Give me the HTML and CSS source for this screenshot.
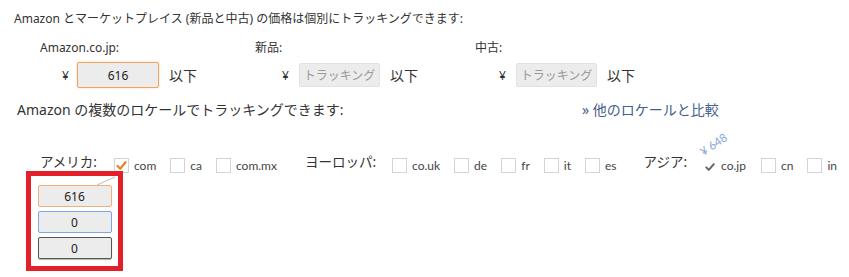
FILE: index.html
```html
<!DOCTYPE html>
<html lang="ja">
<head>
<meta charset="utf-8">
<title>Tracking</title>
<link rel="stylesheet" href="styles.css">
</head>
<body>
<div class="page">
  <p class="intro">Amazon とマーケットプレイス (新品と中古) の価格は個別にトラッキングできます:</p>
  <div class="prices">
    <div class="price-col col-amazon">
      <div class="price-label">Amazon.co.jp:</div>
      <div class="price-ctrl">
        <span class="yen">¥</span>
        <span class="field field-active">616</span>
        <span class="below">以下</span>
      </div>
    </div>
    <div class="price-col col-new">
      <div class="price-label">新品:</div>
      <div class="price-ctrl">
        <span class="yen">¥</span>
        <span class="field field-off">トラッキング</span>
        <span class="below">以下</span>
      </div>
    </div>
    <div class="price-col col-used">
      <div class="price-label">中古:</div>
      <div class="price-ctrl">
        <span class="yen">¥</span>
        <span class="field field-off">トラッキング</span>
        <span class="below">以下</span>
      </div>
    </div>
  </div>
  <div class="locale-head">
    <span class="locale-title">Amazon の複数のロケールでトラッキングできます:</span>
    <a class="compare" href="#">» 他のロケールと比較</a>
  </div>
  <div class="locales">
    <span class="region region-us">アメリカ:</span>
    <label class="loc loc-com"><span class="box box-checked"><svg viewBox="0 0 15 15" width="15" height="15"><path d="M3.5 8 L6.2 10.8 L11.5 4.2" fill="none" stroke="#e8822e" stroke-width="2.2" stroke-linecap="round" stroke-linejoin="round"/></svg></span>com</label>
    <label class="loc"><span class="box"></span>ca</label>
    <label class="loc"><span class="box"></span>com.mx</label>
    <span class="region region-eu">ヨーロッパ:</span>
    <label class="loc"><span class="box"></span>co.uk</label>
    <label class="loc"><span class="box"></span>de</label>
    <label class="loc"><span class="box"></span>fr</label>
    <label class="loc"><span class="box"></span>it</label>
    <label class="loc"><span class="box"></span>es</label>
    <span class="region region-asia">アジア:</span>
    <label class="loc loc-jp"><span class="tick"><svg viewBox="0 0 10 10" width="10" height="10"><path d="M1.3 5.4 L3.8 7.9 L8.8 2.2" fill="none" stroke="#666" stroke-width="2" stroke-linecap="round" stroke-linejoin="round"/></svg></span>co.jp<span class="jp-price">¥ 648</span></label>
    <label class="loc"><span class="box"></span>cn</label>
    <label class="loc"><span class="box"></span>in</label>
    <div class="popup">
      <svg class="popup-line" width="20" height="10" viewBox="0 0 20 10"><path d="M1 9 L19 1" stroke="#c8c8c8" stroke-width="1.2"/></svg>
      <span class="mini mini-orange">616</span>
      <span class="mini mini-blue">0</span>
      <span class="mini mini-dark">0</span>
    </div>
  </div>
</div>
</body>
</html>
```
FILE: styles.css
```css
html, body {
  margin: 0;
  padding: 0;
  background: #ffffff;
}
body {
  font-family: "Noto Sans", "Noto Sans CJK JP", sans-serif;
  color: #333333;
  width: 849px;
  height: 277px;
  overflow: hidden;
}
.page {
  padding: 10px 0 0 14px;
}
.intro {
  margin: 0;
  font-size: 12px;
  line-height: 18px;
  color: #333;
}
.prices {
  display: flex;
  margin-top: 12px;
  padding-left: 26px;
}
.price-col {
  display: flex;
  flex-direction: column;
}
.col-amazon { width: 215px; }
.col-new { width: 220px; }
.price-label {
  font-size: 12px;
  line-height: 16px;
  color: #333;
}
.price-ctrl {
  display: flex;
  align-items: center;
  margin-top: 6px;
  height: 26px;
}
.col-amazon .price-ctrl { padding-left: 22px; }
.col-new .price-ctrl { padding-left: 27px; }
.col-used .price-ctrl { padding-left: 24px; }
.yen {
  font-size: 12px;
  width: 15px;
  color: #333;
}
.field {
  display: flex;
  align-items: center;
  justify-content: center;
  box-sizing: border-box;
  font-size: 12px;
  background: #ececec;
}
.field-active {
  width: 82px;
  height: 26px;
  border: 1px solid #f0a45e;
  border-radius: 2px;
  color: #222;
  box-shadow: 0 0 2px rgba(240, 164, 94, 0.5);
}
.field-off {
  width: 81px;
  height: 24px;
  border: 1px solid #e2e2e2;
  border-radius: 2px;
  color: #9a9a9a;
  margin-left: 2px;
}
.below {
  font-size: 14px;
  margin-left: 10px;
  color: #333;
}
.locale-head {
  display: flex;
  align-items: center;
  margin-top: 10px;
  padding-left: 3px;
  height: 22px;
}
.locale-title {
  font-size: 14px;
  width: 565px;
  color: #333;
}
.compare {
  font-size: 14px;
  color: #44608c;
  text-decoration: none;
}
.locales {
  position: relative;
  display: flex;
  align-items: center;
  margin-top: 33px;
  padding-left: 26px;
  height: 24px;
  font-size: 12px;
  white-space: nowrap;
}
.locales > * {
  flex-shrink: 0;
}
.region {
  font-size: 13.5px;
  color: #333;
  position: relative;
  top: -4px;
}
.region-us { margin-right: 17px; }
.region-eu { margin-left: 14px; margin-right: 16px; }
.region-asia { margin-left: 13px; margin-right: 18px; }
.loc {
  display: flex;
  align-items: center;
  font-family: "Lato", "Noto Sans", sans-serif;
  color: #444;
  margin-right: 14px;
  position: relative;
}
.loc-jp { margin-right: 15px; }
.box {
  display: inline-block;
  box-sizing: border-box;
  width: 15px;
  height: 15px;
  border: 1px solid #d4d4d4;
  margin-right: 5px;
  position: relative;
}
.box svg {
  position: absolute;
  left: -1px;
  top: -1px;
}
.tick {
  display: inline-block;
  width: 10px;
  height: 10px;
  margin-right: 6px;
}
.jp-price {
  position: absolute;
  left: 0;
  top: -13px;
  font-size: 11.5px;
  line-height: 13px;
  color: #8aa6d4;
  transform: rotate(-35deg);
  transform-origin: left bottom;
}
.popup {
  position: absolute;
  left: 12px;
  top: 18px;
  width: 97px;
  height: 100px;
  box-sizing: border-box;
  border: 5px solid #e3202a;
  background: #ffffff;
  display: flex;
  flex-direction: column;
  align-items: center;
  padding-top: 9px;
  gap: 4px;
}
.popup-line {
  position: absolute;
  left: 65px;
  top: 0;
}
.mini {
  display: flex;
  align-items: center;
  justify-content: center;
  box-sizing: border-box;
  width: 74px;
  height: 22px;
  background: #ececec;
  font-size: 12px;
  color: #222;
  border-radius: 2px;
}
.mini-orange { border: 1px solid #f0b07a; }
.mini-blue { border: 1px solid #7aa7e8; }
.mini-dark { border: 1px solid #555; box-shadow: 0 1px 1px rgba(0,0,0,0.3); }
```
